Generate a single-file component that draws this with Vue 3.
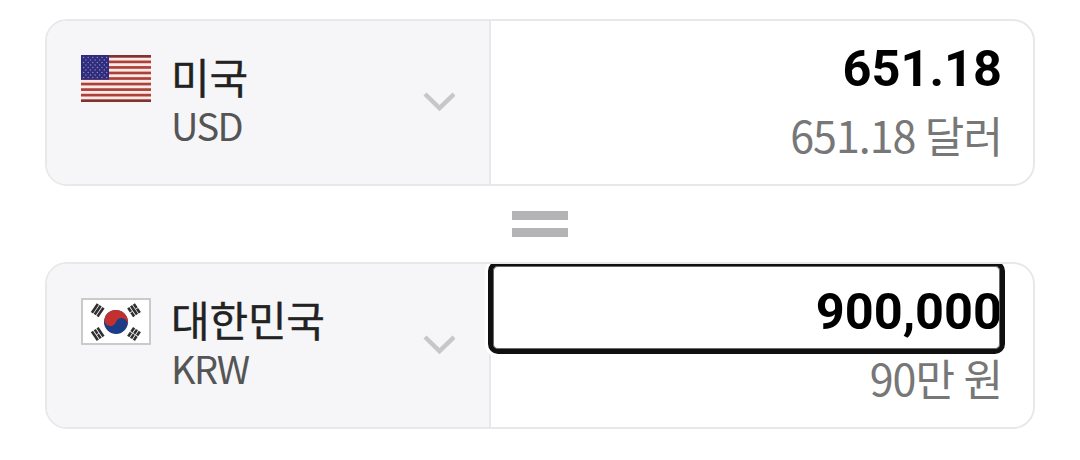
<script setup>
    import {ref} from 'vue'

    const rows = ref([
        {
            code: 'USD',
            country: '미국',
            amount: '651.18',
            text: '651.18 달러',
            focused: false
        },
        {
            code: 'KRW',
            country: '대한민국',
            amount: '900,000',
            text: '90만 원',
            focused: true
        }
    ])

    // star positions on the blue canton
    const stars = []
    for (let row = 0; row < 9; row++) {
        const count = row % 2 ? 5 : 6
        for (let col = 0; col < count; col++) {
            stars.push({
                x: 2.6 + col * 4.6 + (row % 2 ? 2.3 : 0),
                y: 2.5 + row * 2.5
            })
        }
    }

    const trigrams = [
        {x: 16.7, y: 12.2, angle: -56, broken: []},
        {x: 53, y: 12.2, angle: 56, broken: [-3.4, 3.4]},
        {x: 16.7, y: 36, angle: 56, broken: [0]},
        {x: 53, y: 36, angle: -56, broken: [-3.4, 0, 3.4]}
    ]
</script>

<template>
    <div class="converter">
        <template v-for="(row, index) in rows" :key="row.code">
            <div v-if="index > 0" class="equals">
                <span></span>
                <span></span>
            </div>

            <div class="card">
                <div class="currency">
                    <svg v-if="row.code === 'USD'" class="flag" viewBox="0 0 70 47">
                        <rect width="70" height="47" fill="#fdeae6"/>
                        <rect v-for="n in 9" :key="n" x="0" :y="(n - 1) * 5.54" width="70" height="2.7" :fill="n === 1 || n === 9 ? '#82332f' : '#ac403b'"/>
                        <rect width="28" height="24.7" fill="#302c7c"/>
                        <circle v-for="(star, i) in stars" :key="'s' + i" :cx="star.x" :cy="star.y" r="0.75" fill="#8b89c6"/>
                    </svg>
                    <svg v-else class="flag" viewBox="0 0 70 47">
                        <rect x="1" y="1" width="68" height="45" fill="#fff" stroke="#cacaca" stroke-width="2"/>
                        <g transform="rotate(20 35 24)">
                            <circle cx="35" cy="24" r="12" fill="#1c3c85"/>
                            <path d="M23 24a12 12 0 0 1 24 0a6 6 0 0 0-12 0a6 6 0 0 1-12 0z" fill="#c2302f"/>
                        </g>
                        <g v-for="(tri, i) in trigrams" :key="i" :transform="`translate(${tri.x} ${tri.y}) rotate(${tri.angle})`">
                            <rect v-for="y in [-3.4, 0, 3.4]" :key="y" x="-5.3" :y="y - 1.3" width="10.6" height="2.6" fill="#303030"/>
                            <rect v-for="y in tri.broken" :key="'b' + y" x="-0.4" :y="y - 1.3" width="0.8" height="2.6" fill="#fff"/>
                        </g>
                    </svg>

                    <div class="names">
                        <div class="country">{{ row.country }}</div>
                        <div class="code">{{ row.code }}</div>
                    </div>

                    <svg class="arrow" viewBox="0 0 32 20">
                        <path d="M2 2L16.5 16L31 2" fill="none" stroke="#c7c7c9" stroke-width="4.5"/>
                    </svg>
                </div>

                <div class="value">
                    <div class="amount" :class="{focused: row.focused}">{{ row.amount }}</div>
                    <div class="unit">{{ row.text }}</div>
                </div>
            </div>
        </template>
    </div>
</template>

<style>
    body{
        margin: 0;
        background: #fff;
    }
</style>

<style scoped>
    .converter{
        box-sizing: border-box;
        width: 1080px;
        height: 460px;
        padding: 19px 45px 0;
        font-family: "Noto Sans CJK KR", sans-serif;
        overflow: hidden;
    }

    .card{
        box-sizing: border-box;
        display: flex;
        height: 167px;
        border: 2px solid #e8e8ea;
        border-radius: 22px;
        overflow: hidden;
    }

    .currency{
        box-sizing: border-box;
        display: flex;
        width: 444px;
        padding: 0 34px;
        border-right: 2px solid #e8e8ea;
        background: #f6f6f9;
    }

    .flag{
        width: 70px;
        height: 47px;
        margin-top: 34px;
    }

    .names{
        flex: 1;
        padding: 30px 0 0 20px;
    }

    .country{
        font-size: 42px;
        line-height: 50px;
        letter-spacing: -0.2px;
        color: #222;
        -webkit-text-stroke: 0.4px #222;
    }

    .code{
        padding-top: 2px;
        font-size: 38px;
        line-height: 44px;
        letter-spacing: -1.6px;
        color: #555;
    }

    .arrow{
        width: 32px;
        height: 20px;
        margin-top: 71px;
    }

    .value{
        flex: 1;
        padding-right: 31px;
        text-align: right;
    }

    .amount{
        box-sizing: border-box;
        position: relative;
        height: 87px;
        padding-top: 9px;
        font-family: Roboto, sans-serif;
        font-size: 50.5px;
        font-weight: 700;
        line-height: 78px;
        color: #000;
    }

    .focused::after{
        content: "";
        position: absolute;
        top: -3px;
        right: -3px;
        bottom: -3px;
        left: -3px;
        border: 5px solid #101010;
        border-radius: 10px;
        box-shadow: 0 0 0 3px #fff, inset 0 0 0 1px #6a6a6a;
    }

    .unit{
        font-size: 43px;
        line-height: 52px;
        letter-spacing: -1px;
        word-spacing: 0.8px;
        color: #777;
    }

    .equals{
        box-sizing: border-box;
        display: flex;
        flex-direction: column;
        align-items: center;
        gap: 8px;
        height: 76px;
        padding-top: 25px;
    }

    .equals span{
        width: 56px;
        height: 9px;
        background: #b4b4b6;
    }
</style>
